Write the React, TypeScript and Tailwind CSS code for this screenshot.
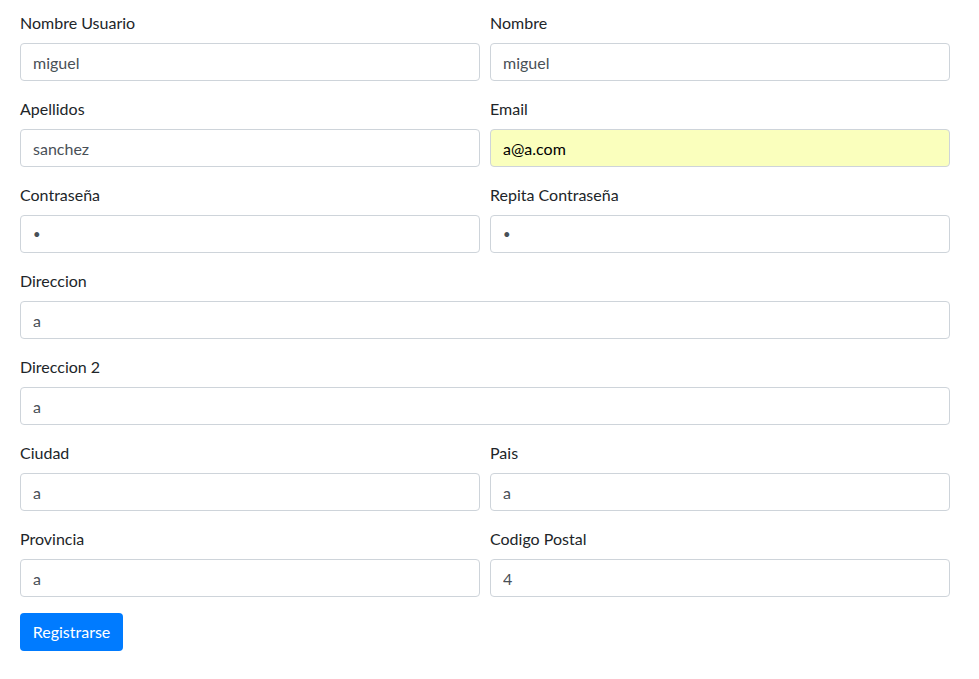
import React from "react";

type Field = { label: string; value: string; type?: string; autofill?: boolean };

function FormField({ label, value, type = "text", autofill }: Field) {
  return (
    <div className="flex flex-col mb-4">
      <label className="mb-2 leading-6 text-[#212529]">{label}</label>
      <input
        type={type}
        defaultValue={value}
        className={`h-[38px] w-full rounded-[4px] border border-[#ced4da] px-3 py-[6px] leading-6 outline-none ${
          autofill ? "bg-[#faffbd] text-black" : "bg-white text-[#495057]"
        } ${type === "password" ? "text-[13px]" : ""}`}
      />
    </div>
  );
}

export default function App() {
  return (
    <div
      className="min-h-[679px] bg-white pt-[11px] pl-[20px]"
      style={{ fontFamily: "Lato, 'Noto Sans', sans-serif", fontSize: 16 }}
    >
      <form className="w-[930px]" onSubmit={(e) => e.preventDefault()}>
        <div className="grid grid-cols-2 gap-x-[10px]">
          <FormField label="Nombre Usuario" value="miguel" />
          <FormField label="Nombre" value="miguel" />
          <FormField label="Apellidos" value="sanchez" />
          <FormField label="Email" value="a@a.com" autofill />
          <FormField label="Contraseña" value="a" type="password" />
          <FormField label="Repita Contraseña" value="a" type="password" />
        </div>
        <FormField label="Direccion" value="a" />
        <FormField label="Direccion 2" value="a" />
        <div className="grid grid-cols-2 gap-x-[10px]">
          <FormField label="Ciudad" value="a" />
          <FormField label="Pais" value="a" />
          <FormField label="Provincia" value="a" />
          <FormField label="Codigo Postal" value="4" />
        </div>
        <button
          type="submit"
          className="h-[38px] w-[103px] rounded-[4px] bg-[#007bff] leading-6 text-white"
        >
          Registrarse
        </button>
      </form>
    </div>
  );
}
